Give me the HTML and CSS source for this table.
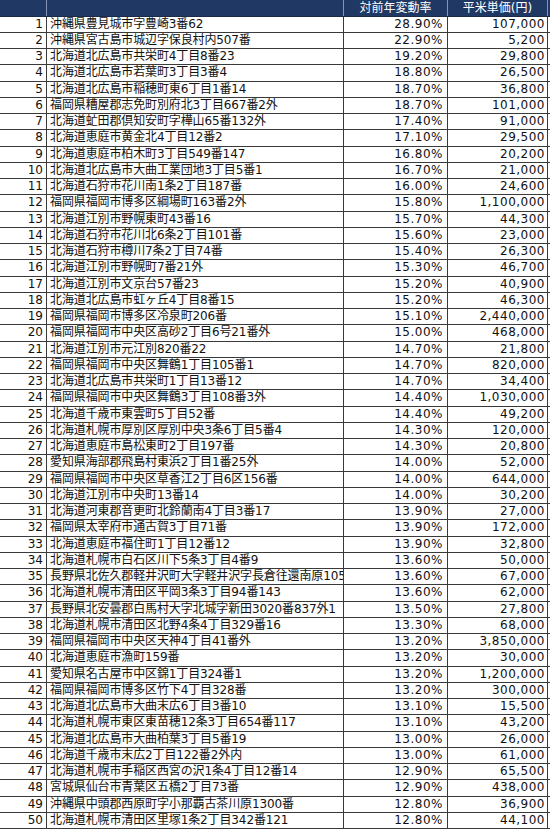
FILE: index.html
```html
<!DOCTYPE html>
<html lang="ja">
<head>
<meta charset="utf-8">
<title>対前年変動率</title>
<link rel="stylesheet" href="styles.css">
</head>
<body>
<div class="sheet">
  <div class="row head"><div class="c num"></div><div class="c addr"></div><div class="c rate">対前年変動率</div><div class="c price">平米単価(円)</div></div>
  <div class="row"><div class="c num">1</div><div class="c addr">沖縄県豊見城市字豊崎3番62</div><div class="c rate">28.90%</div><div class="c price">107,000</div></div>
  <div class="row"><div class="c num">2</div><div class="c addr">沖縄県宮古島市城辺字保良村内507番</div><div class="c rate">22.90%</div><div class="c price">5,200</div></div>
  <div class="row"><div class="c num">3</div><div class="c addr">北海道北広島市共栄町4丁目8番23</div><div class="c rate">19.20%</div><div class="c price">29,800</div></div>
  <div class="row"><div class="c num">4</div><div class="c addr">北海道北広島市若葉町3丁目3番4</div><div class="c rate">18.80%</div><div class="c price">26,500</div></div>
  <div class="row"><div class="c num">5</div><div class="c addr">北海道北広島市稲穂町東6丁目1番14</div><div class="c rate">18.70%</div><div class="c price">36,800</div></div>
  <div class="row"><div class="c num">6</div><div class="c addr">福岡県糟屋郡志免町別府北3丁目667番2外</div><div class="c rate">18.70%</div><div class="c price">101,000</div></div>
  <div class="row"><div class="c num">7</div><div class="c addr">北海道虻田郡倶知安町字樺山65番132外</div><div class="c rate">17.40%</div><div class="c price">91,000</div></div>
  <div class="row"><div class="c num">8</div><div class="c addr">北海道恵庭市黄金北4丁目12番2</div><div class="c rate">17.10%</div><div class="c price">29,500</div></div>
  <div class="row"><div class="c num">9</div><div class="c addr">北海道恵庭市柏木町3丁目549番147</div><div class="c rate">16.80%</div><div class="c price">20,200</div></div>
  <div class="row"><div class="c num">10</div><div class="c addr">北海道北広島市大曲工業団地3丁目5番1</div><div class="c rate">16.70%</div><div class="c price">21,000</div></div>
  <div class="row"><div class="c num">11</div><div class="c addr">北海道石狩市花川南1条2丁目187番</div><div class="c rate">16.00%</div><div class="c price">24,600</div></div>
  <div class="row"><div class="c num">12</div><div class="c addr">福岡県福岡市博多区綱場町163番2外</div><div class="c rate">15.80%</div><div class="c price">1,100,000</div></div>
  <div class="row"><div class="c num">13</div><div class="c addr">北海道江別市野幌東町43番16</div><div class="c rate">15.70%</div><div class="c price">44,300</div></div>
  <div class="row"><div class="c num">14</div><div class="c addr">北海道石狩市花川北6条2丁目101番</div><div class="c rate">15.60%</div><div class="c price">23,000</div></div>
  <div class="row"><div class="c num">15</div><div class="c addr">北海道石狩市樽川7条2丁目74番</div><div class="c rate">15.40%</div><div class="c price">26,300</div></div>
  <div class="row"><div class="c num">16</div><div class="c addr">北海道江別市野幌町7番21外</div><div class="c rate">15.30%</div><div class="c price">46,700</div></div>
  <div class="row"><div class="c num">17</div><div class="c addr">北海道江別市文京台57番23</div><div class="c rate">15.20%</div><div class="c price">40,900</div></div>
  <div class="row"><div class="c num">18</div><div class="c addr">北海道北広島市虹ヶ丘4丁目8番15</div><div class="c rate">15.20%</div><div class="c price">46,300</div></div>
  <div class="row"><div class="c num">19</div><div class="c addr">福岡県福岡市博多区冷泉町206番</div><div class="c rate">15.10%</div><div class="c price">2,440,000</div></div>
  <div class="row"><div class="c num">20</div><div class="c addr">福岡県福岡市中央区高砂2丁目6号21番外</div><div class="c rate">15.00%</div><div class="c price">468,000</div></div>
  <div class="row"><div class="c num">21</div><div class="c addr">北海道江別市元江別820番22</div><div class="c rate">14.70%</div><div class="c price">21,800</div></div>
  <div class="row"><div class="c num">22</div><div class="c addr">福岡県福岡市中央区舞鶴1丁目105番1</div><div class="c rate">14.70%</div><div class="c price">820,000</div></div>
  <div class="row"><div class="c num">23</div><div class="c addr">北海道北広島市共栄町1丁目13番12</div><div class="c rate">14.70%</div><div class="c price">34,400</div></div>
  <div class="row"><div class="c num">24</div><div class="c addr">福岡県福岡市中央区舞鶴3丁目108番3外</div><div class="c rate">14.40%</div><div class="c price">1,030,000</div></div>
  <div class="row"><div class="c num">25</div><div class="c addr">北海道千歳市東雲町5丁目52番</div><div class="c rate">14.40%</div><div class="c price">49,200</div></div>
  <div class="row"><div class="c num">26</div><div class="c addr">北海道札幌市厚別区厚別中央3条6丁目5番4</div><div class="c rate">14.30%</div><div class="c price">120,000</div></div>
  <div class="row"><div class="c num">27</div><div class="c addr">北海道恵庭市島松東町2丁目197番</div><div class="c rate">14.30%</div><div class="c price">20,800</div></div>
  <div class="row"><div class="c num">28</div><div class="c addr">愛知県海部郡飛島村東浜2丁目1番25外</div><div class="c rate">14.00%</div><div class="c price">52,000</div></div>
  <div class="row"><div class="c num">29</div><div class="c addr">福岡県福岡市中央区草香江2丁目6区156番</div><div class="c rate">14.00%</div><div class="c price">644,000</div></div>
  <div class="row"><div class="c num">30</div><div class="c addr">北海道江別市中央町13番14</div><div class="c rate">14.00%</div><div class="c price">30,200</div></div>
  <div class="row"><div class="c num">31</div><div class="c addr">北海道河東郡音更町北鈴蘭南4丁目3番17</div><div class="c rate">13.90%</div><div class="c price">27,000</div></div>
  <div class="row"><div class="c num">32</div><div class="c addr">福岡県太宰府市通古賀3丁目71番</div><div class="c rate">13.90%</div><div class="c price">172,000</div></div>
  <div class="row"><div class="c num">33</div><div class="c addr">北海道恵庭市福住町1丁目12番12</div><div class="c rate">13.90%</div><div class="c price">32,800</div></div>
  <div class="row"><div class="c num">34</div><div class="c addr">北海道札幌市白石区川下5条3丁目4番9</div><div class="c rate">13.60%</div><div class="c price">50,000</div></div>
  <div class="row"><div class="c num">35</div><div class="c addr">長野県北佐久郡軽井沢町大字軽井沢字長倉往還南原105</div><div class="c rate">13.60%</div><div class="c price">67,000</div></div>
  <div class="row"><div class="c num">36</div><div class="c addr">北海道札幌市清田区平岡3条3丁目94番143</div><div class="c rate">13.60%</div><div class="c price">62,000</div></div>
  <div class="row"><div class="c num">37</div><div class="c addr">長野県北安曇郡白馬村大字北城字新田3020番837外1</div><div class="c rate">13.50%</div><div class="c price">27,800</div></div>
  <div class="row"><div class="c num">38</div><div class="c addr">北海道札幌市清田区北野4条4丁目329番16</div><div class="c rate">13.30%</div><div class="c price">68,000</div></div>
  <div class="row"><div class="c num">39</div><div class="c addr">福岡県福岡市中央区天神4丁目41番外</div><div class="c rate">13.20%</div><div class="c price">3,850,000</div></div>
  <div class="row"><div class="c num">40</div><div class="c addr">北海道恵庭市漁町159番</div><div class="c rate">13.20%</div><div class="c price">30,000</div></div>
  <div class="row"><div class="c num">41</div><div class="c addr">愛知県名古屋市中区錦1丁目324番1</div><div class="c rate">13.20%</div><div class="c price">1,200,000</div></div>
  <div class="row"><div class="c num">42</div><div class="c addr">福岡県福岡市博多区竹下4丁目328番</div><div class="c rate">13.20%</div><div class="c price">300,000</div></div>
  <div class="row"><div class="c num">43</div><div class="c addr">北海道北広島市大曲末広6丁目3番10</div><div class="c rate">13.10%</div><div class="c price">15,500</div></div>
  <div class="row"><div class="c num">44</div><div class="c addr">北海道札幌市東区東苗穂12条3丁目654番117</div><div class="c rate">13.10%</div><div class="c price">43,200</div></div>
  <div class="row"><div class="c num">45</div><div class="c addr">北海道北広島市大曲柏葉3丁目5番19</div><div class="c rate">13.00%</div><div class="c price">26,000</div></div>
  <div class="row"><div class="c num">46</div><div class="c addr">北海道千歳市末広2丁目122番2外内</div><div class="c rate">13.00%</div><div class="c price">61,000</div></div>
  <div class="row"><div class="c num">47</div><div class="c addr">北海道札幌市手稲区西宮の沢1条4丁目12番14</div><div class="c rate">12.90%</div><div class="c price">65,500</div></div>
  <div class="row"><div class="c num">48</div><div class="c addr">宮城県仙台市青葉区五橋2丁目73番</div><div class="c rate">12.90%</div><div class="c price">438,000</div></div>
  <div class="row"><div class="c num">49</div><div class="c addr">沖縄県中頭郡西原町字小那覇古茶川原1300番</div><div class="c rate">12.80%</div><div class="c price">36,900</div></div>
  <div class="row"><div class="c num">50</div><div class="c addr">北海道札幌市清田区里塚1条2丁目342番121</div><div class="c rate">12.80%</div><div class="c price">44,100</div></div>
</div>
</body>
</html>
```

FILE: styles.css
```css
html, body {
  margin: 0;
  padding: 0;
  background: #ffffff;
}

.sheet {
  width: 550px;
  font-family: "DejaVu Sans", "Noto Sans CJK JP", sans-serif;
  font-size: 12px;
  color: #111111;
}

.row {
  display: grid;
  grid-template-columns: 46px 297px 104px 101px;
  height: 16.25px;
  box-sizing: border-box;
  border-bottom: 1px solid #3a3a3a;
}

.row.head {
  height: 16.5px;
  background: #203864;
  color: #ffffff;
  border-bottom: 1px solid #1a2a4a;
}

.c {
  box-sizing: border-box;
  white-space: nowrap;
  overflow: hidden;
  line-height: 15px;
}

.addr,
.rate,
.price {
  border-left: 1px solid #3a3a3a;
}

.price {
  border-right: 1px solid #3a3a3a;
}

.num {
  text-align: right;
  padding-right: 3px;
}

.addr {
  padding-left: 3px;
  letter-spacing: -0.12px;
  text-overflow: clip;
}

.rate {
  text-align: right;
  padding-right: 4px;
  letter-spacing: 0.5px;
}

.price {
  text-align: right;
  padding-right: 2px;
  letter-spacing: 0.5px;
}

.head .c {
  border-color: #8494b4;
  text-align: center;
  padding: 0;
  letter-spacing: 0;
  line-height: 16px;
}
```
